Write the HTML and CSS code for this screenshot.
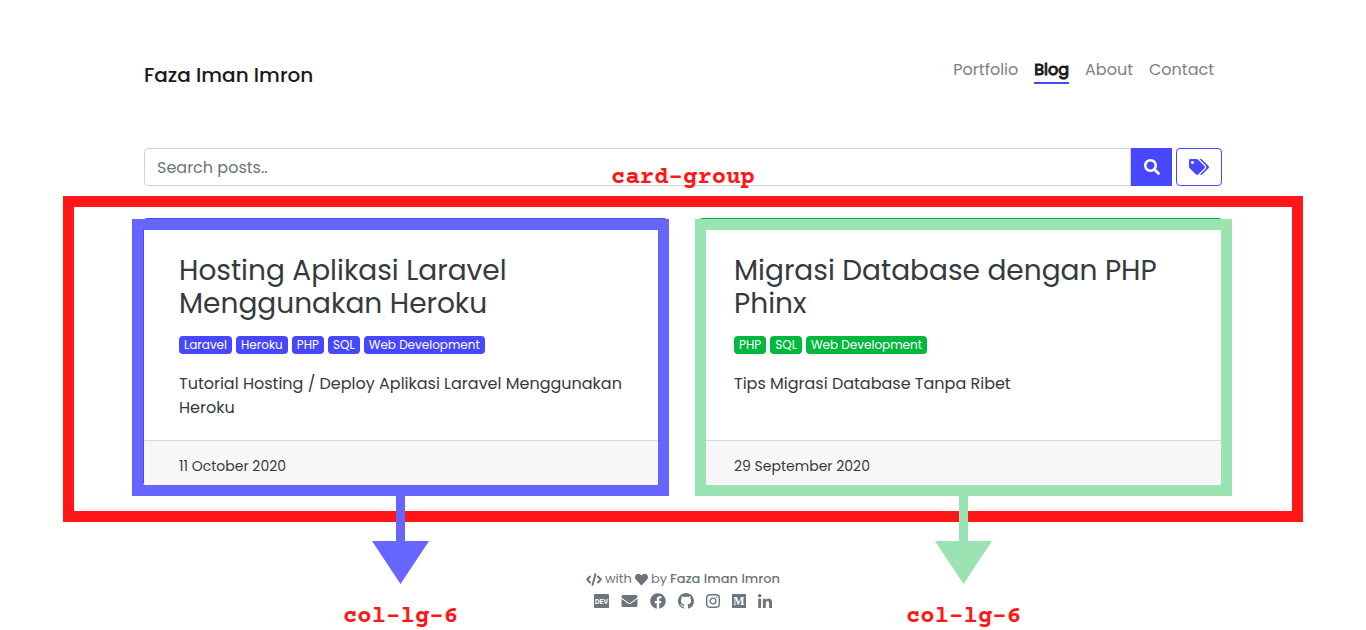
FILE: index.html
```html
<!DOCTYPE html>
<html lang="id">
<head>
<meta charset="utf-8">
<meta name="viewport" content="width=device-width, initial-scale=1">
<title>Blog - Faza Iman Imron</title>
<link rel="stylesheet" href="styles.css">
</head>
<body>
<div class="page">
  <header class="header">
    <a class="brand" href="#">Faza Iman Imron</a>
    <nav class="nav">
      <a class="nav-link" href="#">Portfolio</a>
      <a class="nav-link nav-link-active" href="#">Blog</a>
      <a class="nav-link" href="#">About</a>
      <a class="nav-link" href="#">Contact</a>
    </nav>
  </header>

  <form class="search">
    <input class="search-input" type="text" placeholder="Search posts.." aria-label="Search posts">
    <button class="search-button" type="button" aria-label="Search">
      <svg width="16" height="16" viewBox="0 0 512 512" fill="currentColor"><path d="M505 442.7L405.3 343c-4.5-4.5-10.6-7-17-7H372c27.6-35.3 44-79.7 44-128C416 93.1 322.9 0 208 0S0 93.1 0 208s93.1 208 208 208c48.3 0 92.7-16.4 128-44v16.3c0 6.4 2.5 12.5 7 17l99.7 99.7c9.4 9.4 24.6 9.4 33.9 0l28.3-28.3c9.4-9.4 9.4-24.6.1-34zM208 336c-70.7 0-128-57.2-128-128 0-70.7 57.2-128 128-128 70.7 0 128 57.2 128 128 0 70.7-57.2 128-128 128z"/></svg>
    </button>
    <button class="tags-button" type="button" aria-label="Tags">
      <svg width="20" height="16" viewBox="0 0 640 512" fill="currentColor"><path d="M497.941 225.941L286.059 14.059A48 48 0 0 0 252.118 0H48C21.49 0 0 21.49 0 48v204.118a48 48 0 0 0 14.059 33.941l211.882 211.882c18.744 18.745 49.136 18.746 67.882 0l204.118-204.118c18.745-18.745 18.745-49.137 0-67.882zM112 160c-26.51 0-48-21.49-48-48s21.49-48 48-48 48 21.49 48 48-21.49 48-48 48zm513.941 133.823L421.823 497.941c-18.745 18.745-49.137 18.745-67.882 0l-.36-.36L527.64 323.522c16.999-16.999 26.362-39.6 26.362-63.64s-9.362-46.641-26.362-63.64L331.397 0h48.721a48 48 0 0 1 33.941 14.059l211.882 211.882c18.745 18.745 18.745 49.137 0 67.882z"/></svg>
    </button>
  </form>

  <main class="group">
    <span class="note note-group">card-group</span>
    <article class="card card-blue">
      <div class="card-body">
        <h2 class="title">Hosting Aplikasi Laravel Menggunakan Heroku</h2>
        <div class="badges">
          <a class="badge" href="#">Laravel</a>
          <a class="badge" href="#">Heroku</a>
          <a class="badge" href="#">PHP</a>
          <a class="badge" href="#">SQL</a>
          <a class="badge" href="#">Web Development</a>
        </div>
        <p class="text">Tutorial Hosting / Deploy Aplikasi Laravel Menggunakan Heroku</p>
      </div>
      <div class="card-footer">11 October 2020</div>
      <div class="callout">
        <svg width="58" height="88" viewBox="0 0 58 88" fill="currentColor"><path d="M24 0h9v45h24L28.500 88 0 45h24z"/></svg>
        <span class="note">col-lg-6</span>
      </div>
    </article>
    <article class="card card-green">
      <div class="card-body">
        <h2 class="title">Migrasi Database dengan PHP Phinx</h2>
        <div class="badges">
          <a class="badge" href="#">PHP</a>
          <a class="badge" href="#">SQL</a>
          <a class="badge" href="#">Web Development</a>
        </div>
        <p class="text">Tips Migrasi Database Tanpa Ribet</p>
      </div>
      <div class="card-footer">29 September 2020</div>
      <div class="callout">
        <svg width="58" height="88" viewBox="0 0 58 88" fill="currentColor"><path d="M24 0h9v45h24L28.500 88 0 45h24z"/></svg>
        <span class="note">col-lg-6</span>
      </div>
    </article>
  </main>

  <footer class="footer">
    <div class="credit">
      <svg width="16" height="13" viewBox="0 0 16 13" fill="none" stroke="currentColor" stroke-width="2" stroke-linecap="round" stroke-linejoin="round"><path d="M4 3.500L1.200 6.500 4 9.500M12 3.500l2.800 3-2.800 3M9.400 1.200L6.600 11.800"/></svg>
      <span>with</span>
      <svg width="13" height="13" viewBox="0 0 512 512" fill="currentColor"><path d="M462.3 62.6C407.5 15.9 326 24.3 275.7 76.2L256 96.5l-19.7-20.3C186.1 24.3 104.5 15.9 49.7 62.6c-62.8 53.6-66.1 149.8-9.9 207.9l193.5 199.8c12.5 12.9 32.8 12.9 45.3 0l193.5-199.8c56.3-58.1 53-154.3-9.8-207.9z"/></svg>
      <span>by</span>
      <a class="author" href="#">Faza Iman Imron</a>
    </div>
    <div class="social">
      <a class="social-link" href="#" aria-label="DEV"><svg width="15" height="16" viewBox="0 0 15 16"><rect y="1" width="15" height="14" rx="1" fill="currentColor"/><text class="dev-mark" x="7.5" y="10.600" text-anchor="middle">DEV</text></svg></a>
      <a class="social-link" href="#" aria-label="Email"><svg width="17" height="16" viewBox="0 0 512 512" fill="currentColor"><path d="M502.3 190.8c3.9-3.1 9.7-.2 9.7 4.7V400c0 26.5-21.5 48-48 48H48c-26.5 0-48-21.5-48-48V195.6c0-5 5.7-7.8 9.7-4.7 22.4 17.4 52.1 39.5 154.1 113.6 21.1 15.4 56.7 47.8 92.2 47.6 35.7.3 72-32.8 92.3-47.6 102-74.1 131.6-96.3 154-113.7zM256 320c23.2.4 56.6-29.2 73.4-41.4 132.7-96.3 142.8-104.7 173.4-128.7 5.8-4.5 9.2-11.5 9.2-18.9v-19c0-26.5-21.5-48-48-48H48c-26.5 0-48 21.5-48 48v19c0 7.4 3.4 14.3 9.2 18.9 30.6 23.9 40.7 32.4 173.4 128.7 16.8 12.2 50.2 41.8 73.4 41.4z"/></svg></a>
      <a class="social-link" href="#" aria-label="Facebook"><svg width="16" height="16" viewBox="0 0 512 512" fill="currentColor"><path d="M504 256C504 119 393 8 256 8S8 119 8 256c0 123.78 90.69 226.38 209.25 245V327.69h-63V256h63v-54.64c0-62.15 37-96.48 93.67-96.48 27.14 0 55.52 4.84 55.52 4.84v61h-31.28c-30.8 0-40.41 19.12-40.41 38.73V256h68.78l-11 71.69h-57.78V501C413.31 482.38 504 379.78 504 256z"/></svg></a>
      <a class="social-link" href="#" aria-label="GitHub"><svg width="16" height="16" viewBox="0 0 16 16" fill="currentColor"><path d="M8 0C3.58 0 0 3.58 0 8c0 3.54 2.29 6.53 5.47 7.59.4.07.55-.17.55-.38 0-.19-.01-.82-.01-1.49-2.01.37-2.53-.49-2.69-.94-.09-.23-.48-.94-.82-1.13-.28-.15-.68-.52-.01-.53.63-.01 1.08.58 1.23.82.72 1.21 1.87.87 2.33.66.07-.52.28-.87.51-1.07-1.78-.2-3.64-.89-3.64-3.95 0-.87.31-1.59.82-2.15-.08-.2-.36-1.02.08-2.12 0 0 .67-.21 2.2.82.64-.18 1.32-.27 2-.27s1.36.09 2 .27c1.53-1.04 2.2-.82 2.2-.82.44 1.1.16 1.92.08 2.12.51.56.82 1.27.82 2.15 0 3.07-1.87 3.75-3.65 3.95.29.25.54.73.54 1.48 0 1.07-.01 1.93-.01 2.2 0 .21.15.46.55.38A8.01 8.01 0 0 0 16 8c0-4.42-3.58-8-8-8z"/></svg></a>
      <a class="social-link" href="#" aria-label="Instagram"><svg width="14" height="16" viewBox="0 0 14 16" fill="none" stroke="currentColor"><rect x=".7" y="1.7" width="12.6" height="12.6" rx="3.3" stroke-width="1.4"/><circle cx="7" cy="8" r="2.9" stroke-width="1.4"/><circle cx="10.7" cy="4.3" r=".8" fill="currentColor" stroke="none"/></svg></a>
      <a class="social-link" href="#" aria-label="Medium"><svg width="14" height="16" viewBox="0 0 14 16"><rect y="1" width="14" height="14" fill="currentColor"/><text class="medium-mark" x="7" y="12" text-anchor="middle">M</text></svg></a>
      <a class="social-link" href="#" aria-label="LinkedIn"><svg width="14" height="16" viewBox="0 0 14 16" fill="currentColor"><circle cx="1.7" cy="2.7" r="1.7"/><path d="M.2 5.7h2.9V15H.2zM4.9 5.7h2.8v1.2c.5-.9 1.5-1.5 2.8-1.5 2.8 0 3.5 1.8 3.5 4.5V15h-2.9v-4.6c0-1.2-.1-2.5-1.6-2.5s-1.7 1.2-1.7 2.4V15H4.9z"/></svg></a>
    </div>
  </footer>
</div>
</body>
</html>
```
FILE: styles.css
```css
* {
  box-sizing: border-box;
}

body {
  margin: 0;
  background: #fff;
  color: #212529;
  font-family: Poppins, Inter, sans-serif;
  font-size: 16px;
  line-height: 24px;
}

a {
  color: inherit;
  text-decoration: none;
}

svg {
  display: block;
  flex: none;
}

.page {
  max-width: 1240px;
  margin: 0 auto;
  padding: 57px 0 20px;
}

.header {
  display: flex;
  align-items: flex-start;
  justify-content: space-between;
  margin: 0 81px 58px;
}

.brand {
  padding-top: 3px;
  color: #1a1a1a;
  font-size: 20px;
  line-height: 30px;
  font-weight: 500;
}

.nav {
  display: flex;
  gap: 16px;
  padding: 1px 8px 0 0;
}

.nav-link {
  color: #808080;
  border-bottom: 2px solid transparent;
}

.nav-link-active {
  color: #1a1a1a;
  border-color: #4747ff;
  -webkit-text-stroke: 1px currentColor;
}

.search {
  display: flex;
  height: 38px;
  margin: 0 81px 10px;
}

.search-input {
  flex: 1;
  min-width: 0;
  padding: 2px 12px 0;
  border: 1px solid #ced4da;
  border-radius: 4px 0 0 4px;
  font: inherit;
  color: #495057;
}

.search-input::placeholder {
  color: #6c757d;
  opacity: 1;
}

.search-button,
.tags-button {
  display: flex;
  align-items: center;
  justify-content: center;
  border: 1px solid #4747ff;
  padding: 0;
}

.search-button {
  width: 41px;
  background: #4747ff;
  color: #fff;
}

.tags-button {
  width: 46px;
  margin-left: 4px;
  border-radius: 4px;
  background: #fff;
  color: #4747ff;
}

.group {
  position: relative;
  display: grid;
  grid-template-columns: 1fr 1fr;
  gap: 30px;
  padding: 11px 69px 24px;
  border: 11px solid #ff1717;
}

.card {
  position: relative;
  display: flex;
  flex-direction: column;
  border: 1px solid var(--tone);
  border-radius: 4px;
  color: #343a40;
}

.card::after {
  content: "";
  position: absolute;
  inset: 0 -2px -10px -12px;
  border: 11px solid var(--frame);
  pointer-events: none;
}

.card-blue {
  --tone: #4747ff;
  --frame: #6666ff;
}

.card-green {
  --tone: #00b83d;
  --frame: #9be3b3;
}

.card-green::after {
  inset: 0 -10px -10px -4px;
}

.card-body {
  flex: 1;
  padding: 35px 35px 20px;
}

.title {
  margin: 0 0 16px;
  font-size: 28px;
  line-height: 33px;
  font-weight: 400;
}

.badges {
  display: flex;
  gap: 4px;
  margin-bottom: 18px;
}

.badge {
  padding: 0 5px;
  border-radius: 4px;
  background: var(--tone);
  color: #fff;
  font-size: 12px;
  line-height: 18px;
}

.text {
  margin: 0;
}

.card-footer {
  padding: 15px 35px 9px;
  border-top: 1px solid #d9d9d9;
  border-radius: 0 0 3px 3px;
  background: #f7f7f7;
  font-size: 14px;
  line-height: 21px;
}

.note {
  color: #ff1717;
  font-family: "Courier Prime", FreeMono, "Nimbus Mono PS", "Liberation Mono", monospace;
  font-size: 24px;
  line-height: 28px;
  font-weight: 700;
}

.note-group {
  position: absolute;
  top: -43px;
  left: 50%;
  transform: translateX(-50%);
}

.callout {
  position: absolute;
  top: calc(100% + 10px);
  left: -12px;
  right: -2px;
  display: flex;
  flex-direction: column;
  align-items: center;
  gap: 19px;
  color: var(--frame);
}

.card-green .callout {
  left: -4px;
  right: -10px;
}

.footer {
  display: flex;
  flex-direction: column;
  align-items: center;
  gap: 4px;
  padding-top: 47px;
  color: #6c757d;
}

.credit {
  display: flex;
  align-items: center;
  gap: 3px;
  font-size: 13px;
  line-height: 20px;
}

.author {
  font-weight: 500;
}

.social {
  display: flex;
  gap: 12px;
}

.dev-mark {
  fill: #fff;
  font: 700 7px Roboto, sans-serif;
}

.medium-mark {
  fill: #fff;
  font: 700 12px "Liberation Serif", serif;
}
```
